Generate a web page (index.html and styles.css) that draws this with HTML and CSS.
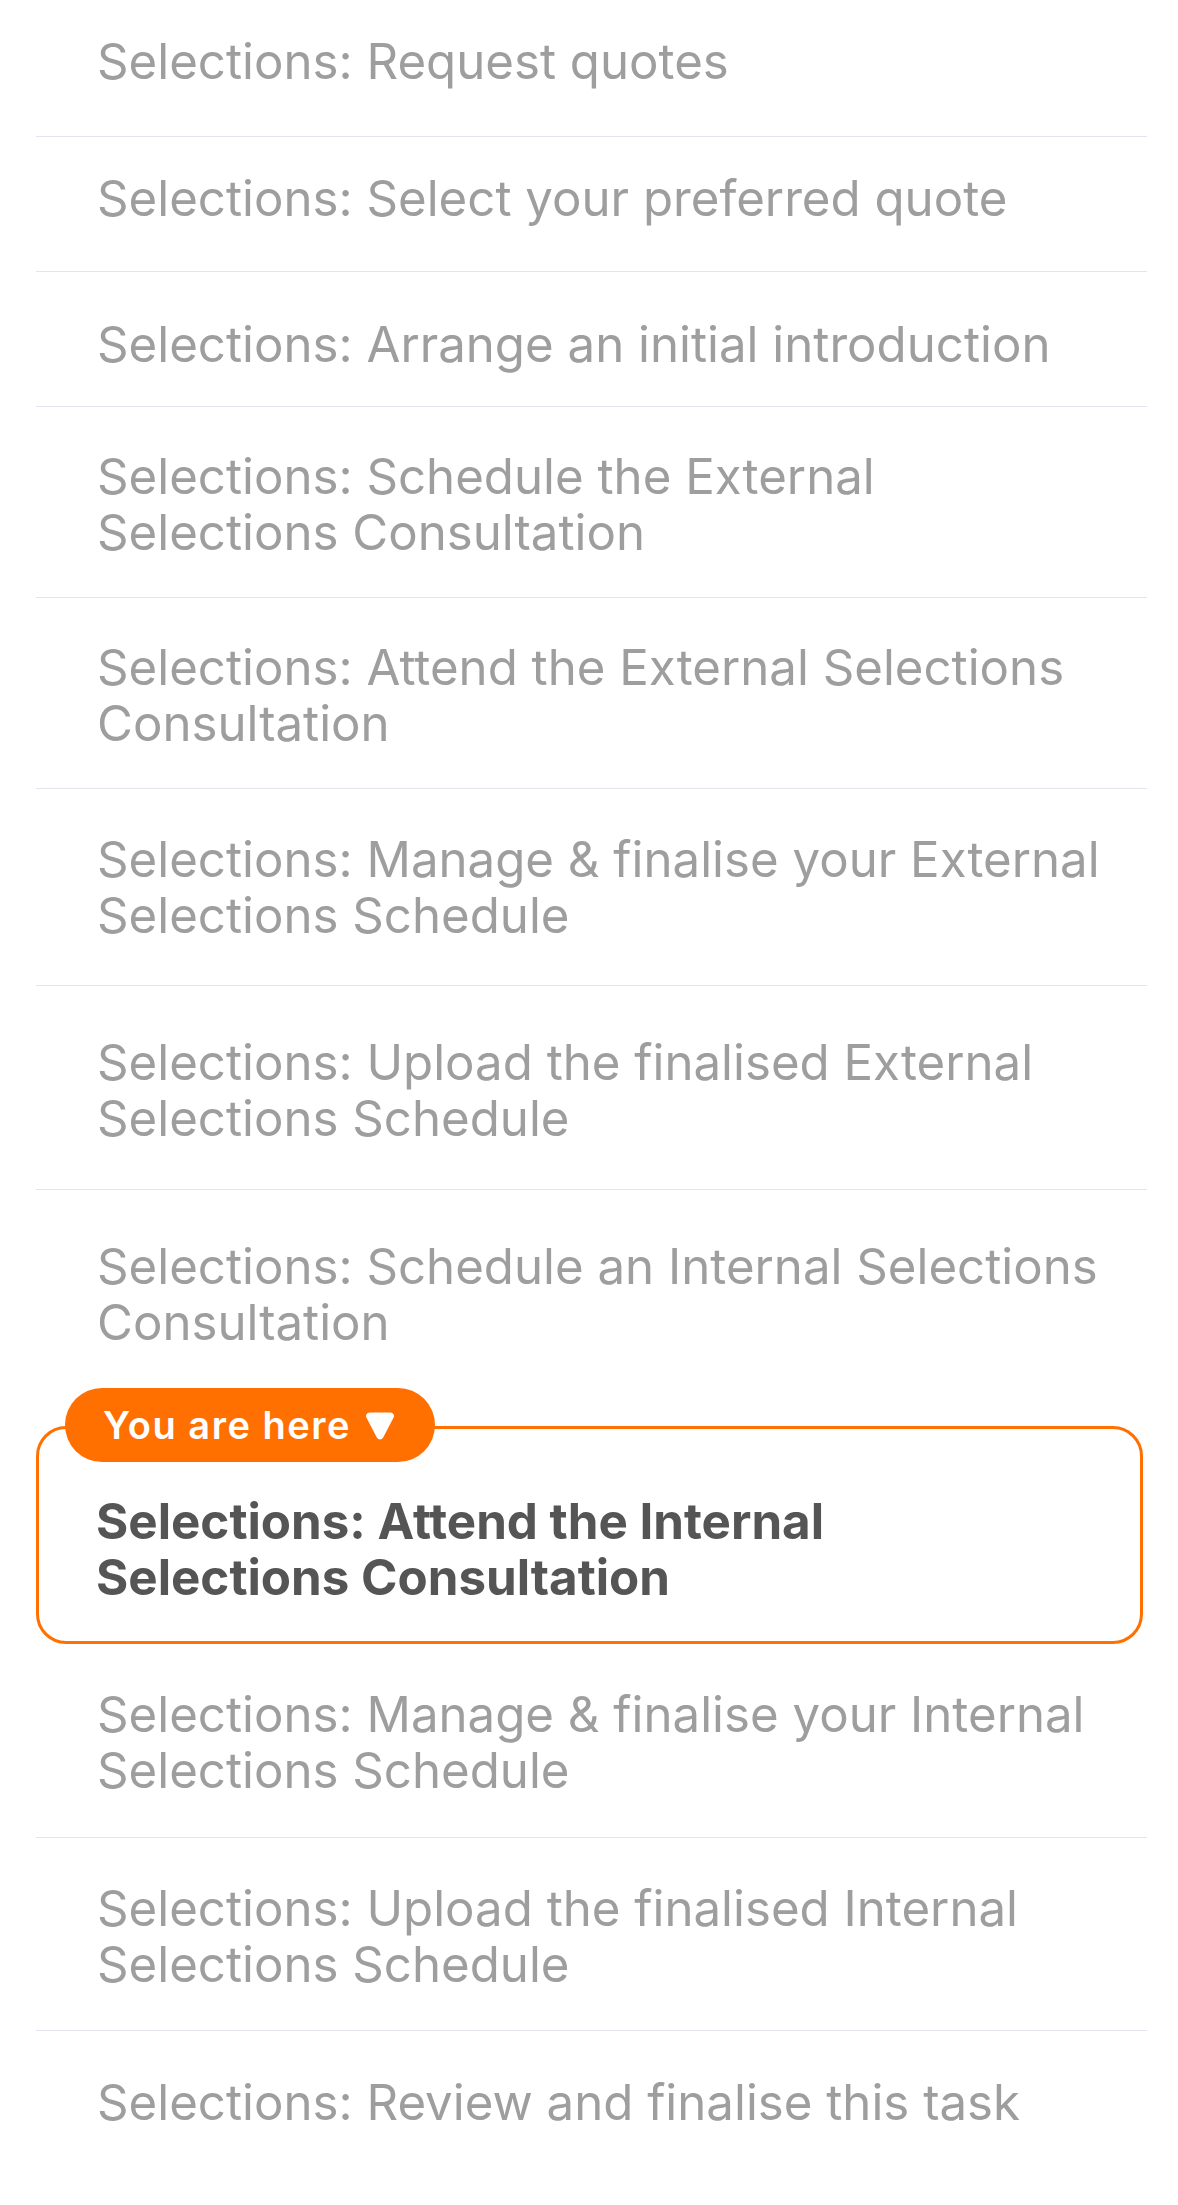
FILE: index.html
```html
<!DOCTYPE html>
<html lang="en">
<head>
<meta charset="utf-8">
<title>Selections steps</title>
<link rel="stylesheet" href="styles.css">
</head>
<body>
<ol class="steps">
  <li class="step step--first"><span class="step__title">Selections: Request quotes</span></li>
  <li class="step step--raised"><span class="step__title">Selections: Select your preferred quote</span></li>
  <li class="step step--lowered"><span class="step__title">Selections: Arrange an initial introduction</span></li>
  <li class="step"><span class="step__title">Selections: Schedule the External Selections Consultation</span></li>
  <li class="step"><span class="step__title">Selections: Attend the External Selections Consultation</span></li>
  <li class="step step--roomy"><span class="step__title">Selections: Manage &amp; finalise your External Selections Schedule</span></li>
  <li class="step step--spacious"><span class="step__title">Selections: Upload the finalised External Selections Schedule</span></li>
  <li class="step step--before-current"><span class="step__title">Selections: Schedule an Internal Selections Consultation</span></li>
  <li class="step step--current">
    <span class="badge">You are here
      <svg class="badge__icon" viewBox="0 0 30 30" aria-hidden="true"><path d="M4.5 2.5 H25.5 A3.5 3.5 0 0 1 28.6 7.6 L18.2 27.6 A3.6 3.6 0 0 1 11.8 27.6 L1.4 7.6 A3.5 3.5 0 0 1 4.5 2.5 Z" fill="#ffffff"/></svg>
    </span>
    <span class="step__title">Selections: Attend the Internal Selections Consultation</span>
  </li>
  <li class="step step--after-current"><span class="step__title">Selections: Manage &amp; finalise your Internal Selections Schedule</span></li>
  <li class="step step--balanced"><span class="step__title">Selections: Upload the finalised Internal Selections Schedule</span></li>
  <li class="step step--last"><span class="step__title">Selections: Review and finalise this task</span></li>
</ol>
</body>
</html>
```

FILE: styles.css
```css
html, body {
  margin: 0;
  padding: 0;
  background: #ffffff;
}

body {
  font-family: "Inter", "Liberation Sans", sans-serif;
  overflow: hidden;
}

.steps {
  list-style: none;
  margin: 0 31px 0 36px;
  padding: 0;
  display: flex;
  flex-direction: column;
}

.step {
  padding: 41px 35px 37px 61px;
  border-bottom: 1px solid #e3e5ee;
  color: #9e9e9e;
  font-size: 49.2px;
  line-height: 56px;
  font-weight: 400;
}

.step__title {
  display: block;
}

.step--first {
  padding-top: 33px;
  padding-bottom: 47px;
}

.step--raised {
  padding-top: 33px;
  padding-bottom: 45px;
}

.step--lowered {
  padding-top: 44px;
  padding-bottom: 34px;
}

.step--roomy {
  padding-top: 42px;
  padding-bottom: 42px;
}

.step--spacious {
  padding-top: 48px;
  padding-bottom: 43px;
}

.step--before-current {
  border-bottom: none;
  padding-top: 48px;
  padding-bottom: 76px;
}

.step--current {
  position: relative;
  margin-right: 4px;
  padding: 64px 90px 36px 57px;
  border: 3px solid #ff7000;
  border-radius: 30px;
  color: #555555;
  font-size: 49.3px;
  font-weight: 700;
}

.badge {
  position: absolute;
  top: -41px;
  left: 26px;
  height: 74px;
  box-sizing: border-box;
  padding: 0 40px 0 38px;
  display: flex;
  align-items: center;
  gap: 14px;
  background: #ff7000;
  border-radius: 37px;
  color: #ffffff;
  font-size: 38px;
  letter-spacing: 1.5px;
  line-height: 1;
  font-weight: 600;
  white-space: nowrap;
}

.badge__icon {
  width: 30px;
  height: 30px;
  flex: none;
}

.step--after-current {
  padding-top: 42px;
  padding-bottom: 39px;
}

.step--balanced {
  padding-top: 42px;
  padding-bottom: 38px;
}

.step--last {
  border-bottom: none;
  padding-top: 43px;
}
```
